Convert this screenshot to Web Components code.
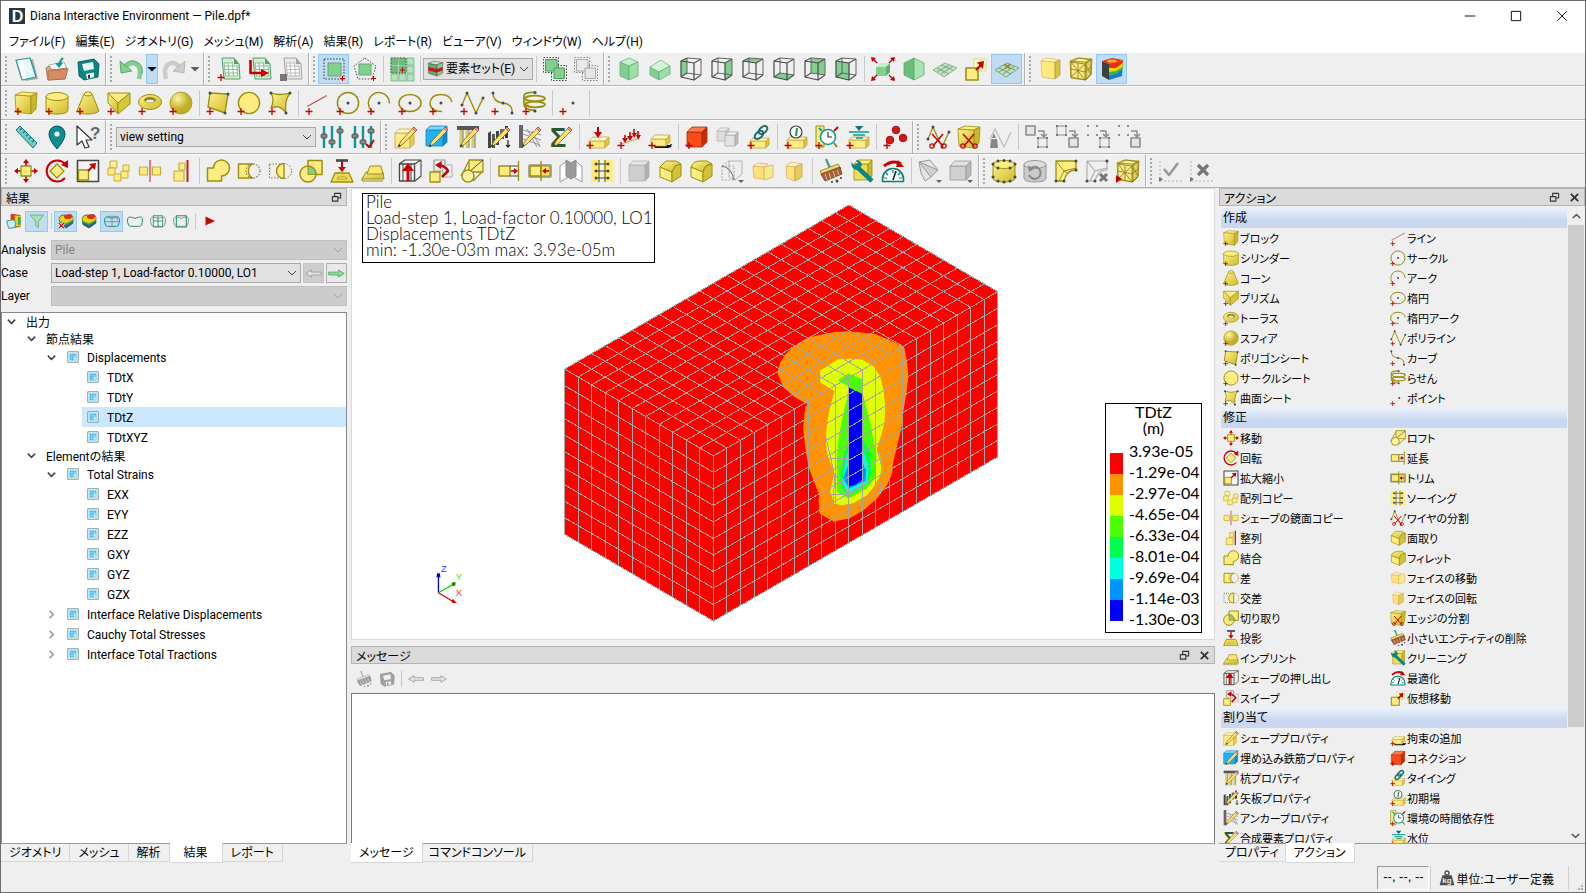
<!DOCTYPE html>
<html lang="ja">
<head>
<meta charset="utf-8">
<title>Diana Interactive Environment — Pile.dpf*</title>
<style>
  html, body {
    margin: 0;
    height: 100%;
  }
  body {
    font-family: Roboto, "Noto Sans CJK JP", sans-serif;
    font-size: 12px;
    color: #000;
    background: #efefef;
    overflow: hidden;
  }
</style>
</head>
<body>
<diana-window></diana-window>

<script>
const RED = '#c80000';
const OLIVE = '#9a9010';
const YEL = '#ffec80';
const DARK = '#484848';
const GREEN = '#82cf90';
const TEAL = '#0a9a9a';

// drawing helpers for the 24x24 icon grid
const poly = (pts, fill, stroke = 'none', sw = 1) => `<polygon points="${pts}" fill="${fill}" stroke="${stroke}" stroke-width="${sw}"/>`;
const line = (d, stroke, sw = 1.2, extra = '') => `<path d="${d}" stroke="${stroke}" stroke-width="${sw}" ${extra}/>`;
const circ = (x, y, r, fill, stroke = 'none', sw = 1) => `<circle cx="${x}" cy="${y}" r="${r}" fill="${fill}" stroke="${stroke}" stroke-width="${sw}"/>`;
const rect = (x, y, w, h, fill, stroke = 'none', sw = 1, extra = '') => `<rect x="${x}" y="${y}" width="${w}" height="${h}" fill="${fill}" stroke="${stroke}" stroke-width="${sw}" ${extra}/>`;
const dots = (...p) => p.map(([x, y]) => circ(x, y, 1.5, DARK)).join('');
const plus = line('M.5 20.5h7M4 17v7', RED, 1.3);
const plusRight = line('M18 21.5h5M20.5 19v5', RED, 1.1);
const box = (x, y, w, h, d, front, side, top, stroke = 'none') =>
  poly(`${x},${y + d} ${x + w - d},${y + d} ${x + w - d},${y + h} ${x},${y + h}`, front, stroke, .8) +
  poly(`${x},${y + d} ${x + d},${y} ${x + w},${y} ${x + w - d},${y + d}`, top, stroke, .8) +
  poly(`${x + w - d},${y + d} ${x + w},${y} ${x + w},${y + h - d} ${x + w - d},${y + h}`, side, stroke, .8);
const pencil = poly('20,2 23,5 9,19 4,22 7,16', '#ffdf6e', '#7c6a20', .8) + poly('20,2 23,5 21.5,6.5 18.5,3.5', '#e89a9a', '#a04040', .6) + poly('4,22 5,19 7,21', '#333');

const FACES = {
  left: '2,4 8,1 8,16 2,20', right: '15,6 22,2 22,18 15,23', top: '2,4 8,1 22,2 15,6',
  bottom: '2,20 8,16 22,18 15,23', front: '2,4 15,6 15,23 2,20', back: '8,1 22,2 22,18 8,16'
};
const wire = face => poly(FACES[face], GREEN) + poly(FACES.back, 'none', '#666', 1) + poly(FACES.front, 'none', DARK, 1.2) +
  line('M2 4L8 1M15 6L22 2M15 23L22 18M2 20L8 16', '#555', 1.1);
const table = (fill, lines, cell) => poly('5,1 17,1 22,7 23,22 7,22', fill, lines, 1) + poly('17,1 17,7 22,7', lines) +
  poly('7,6 16,6 17,9 20,9 20.5,19 8.5,19', '#fff') + line('M7 6h9M7 9h13M8 12.500h12M8 16h12.500M8.500 19h12M7 6l1.500 13M11 6l1 13M15.500 6l1 13M20 9l.5 10', cell, .9);
const block = (c = ['url(#y)', '#c9b72c', YEL]) => poly('1,4 17,5 17,23 2,21', c[0], OLIVE, .8) + poly('1,4 8,1 23,2 17,5', c[2], OLIVE, .8) + poly('17,5 23,2 22,18 17,23', c[1], OLIVE, .8);
const rainbow = poly('2,4 9,7 9,23 2,19', '#3c4043') + poly('2,4 12,1 23,3 9,7', '#e83010') +
  poly('9,7 23,3 22,19 9,23', '#1878d8') + poly('9,7 23,3 22.4,13 16,17 9,19', '#30b850') + poly('9,7 23,3 22.6,10 16,14 9,15', '#f8d000') + poly('9,7 23,3 22.8,6 16,11 9,11', '#e83010') +
  `<ellipse cx="12" cy="4" rx="5" ry="1.6" fill="#ffb030"/>`;
const blob = `<path d="M1 7q6-8 12-3q6-6 10 2v9l-11 8l-10-6z" fill="#3a6c58"/><path d="M2 8q6-7 11-3q5-5 9 1v6l-10 6l-9-4z" fill="#48b050"/><path d="M2 7q6-5 10-2q5-4 10 1v4l-10 5l-9-3z" fill="#f0d010"/><ellipse cx="15" cy="5.5" rx="6" ry="3.5" fill="#e03010"/><path d="M3 16l9 5l10-7v2l-10 7l-9-5z" fill="#2858b0"/>`;
const outline = (extra, strong) => line('M1 14q-1-8 3-8h1q7 4 14 0h1q4 0 3 8q-1 6-4 6H5q-3 0-4-6z', strong ? '#2b8f78' : '#8a9c98', 1.5) + extra;
const arrow = (c, f) => poly('1,12 9,7 9,10 23,10 23,14 9,14 9,17', f, c, 1);
const cylinder = `<path d="M1 5v14q0 4 11 4t11-4V5z" fill="url(#y)" stroke="${OLIVE}"/><ellipse cx="12" cy="5.5" rx="11" ry="4" fill="${YEL}" stroke="${OLIVE}"/>`;
const meshLines = line('M2 5l14 2v16L2 20zM16 7l6-4v14l-6 6M2 5l8-4 12 2M2 12l14 3M9 6v15M2 5l14 18M2 20L16 7M16 15l6-5M16 7l6 10', '#8a7a10', .8);
const scissors = line('M6 9l11 12M17 9L7 21', RED, 1.5) + circ(6, 21, 2.2, 'none', RED, 1.2) + circ(18, 21, 2.2, 'none', RED, 1.2);
const sliders = line('M4 1v22M12 1v22M20 1v22', TEAL, 2.4) + [[4, 11], [12, 17], [20, 6]].map(([x, y]) => rect(x - 3, y - 2, 6, 4, '#888', '#444', .8, 'rx="1"')).join('');
const cogs = (a, b) => a + b + line('M13 6h6v5M16 9l3 3 3-3', '#8c8c8c', 1.5);
const openSq = (x, y) => rect(x, y, 9, 9, 'none', '#8c8c8c', 1) + [[0, 0], [9, 0], [0, 9], [9, 9]].map(([a, b]) => rect(x + a - 1, y + b - 1, 2, 2, '#777')).join('');
const fullSq = (x, y) => rect(x, y, 9, 9, '#e4e4e4', '#8c8c8c', 1.6);
const dotSq = (x, y) => [[0, 0], [9, 0], [0, 9], [9, 9]].map(([a, b]) => rect(x + a - 1, y + b - 1, 2, 2, '#8c8c8c')).join('');
const roof = (d) => poly('2,8 14,13 14,23 2,18', YEL, OLIVE) + `<path d="${d}" fill="url(#y)" stroke="${OLIVE}"/>` + poly('14,13 17,7 23,5 23,17 14,23', '#d3c238', OLIVE);
const dropMark = poly('18,21 24,21 21,24', '#666');

const ICONS = {
  logo: rect(0, 0, 24, 24, '#24383c') + '<text x="4" y="21" font-family="Liberation Sans" font-weight="700" font-size="24" fill="#fff">D</text>',
  new: poly('5,5 19,2 24,22 11,24', '#a4aeae') + poly('2,3 16,1 22,20 8,23', '#e6f8f8', '#2a9494', 1.2) + poly('4,4 9,4 12,21 9,22', '#fff'),
  open: poly('4,8 19,5 22,12 5,13', '#fff', '#aaa') + poly('1,11 4,9 7,13 22,11 20,22 3,23', '#e3a27f', '#a96848', .8) + poly('3,14 23,12 20,22 3,23', '#d88c66', '#a96848', .8) + line('M14 9q0-4 4-8', TEAL, 2.2) + poly('10,6 18,6 14,11', TEAL),
  save: poly('2,5 18,2 23,7 22,20 8,23 3,19', '#0b8585', '#055', .8) + poly('6,7 17,5 18,12 8,14', '#e7f5f5') + poly('10,17 18,15.500 18,20 11,22', '#fff') + poly('12,18 14,17.500 14,21 12,21.500', '#333'),
  undo: line('M6 11q5-7 11-4t3 15', GREEN, 4.6) + line('M4 9q7-8 14-4t5 12', '#4a9a5c', .8) + poly('1,4 2,16 13,14', GREEN, '#4a9a5c', .8),
  redo: line('M18 11q-5-7-11-4t-3 15', '#b4b4b4', 4.4) + poly('23,4 22,16 11,14', '#b4b4b4', '#888', .8),
  tableNew: table('#cfeed4', '#5c9c6c', '#7fb78c') + plus,
  tableArrow: table('#cfeed4', '#5c9c6c', '#7fb78c') + line('M2.500 3v13h13', RED, 2.6) + poly('13,12 21,16 13,20', RED),
  tableGray: table('#e8e8e8', '#a4a4a4', '#b4b4b4') + rect(1, 17, 7, 7, '#777'),
  selRect: rect(2, 2, 20, 20, 'none', DARK, 1.1, 'stroke-dasharray="1.6 1.4"') + rect(6, 6, 13, 13, GREEN, '#5cae6c') + plusRight,
  selPent: `<polygon points="12,1 23,9 19,22 5,22 1,9" fill="none" stroke="${DARK}" stroke-width=".9" stroke-dasharray="1.6 1.4"/>` + rect(6, 7, 12, 11, GREEN, '#5cae6c') + plusRight,
  setGrid: [0, 1, 2].map(r => [0, 1, 2].map(c => rect(1 + c * 8, 1 + r * 8, 7, 7, r < 2 && c < 2 ? '#6cbc7c' : '#b4e2bc', '#7ab088', .8)).join('')).join('') + rect(1, 1, 15, 15, 'none', '#3c6a46', 1, 'stroke-dasharray="1.6 1.4"') + line('M10 13h5M12.500 10.500v5', RED, 1),
  layers: poly('2,4 14,6 14,22 2,18', '#5fae70', '#444', .7) + poly('2,4 10,1 22,3 14,6', '#cfeed4', '#444', .7) + poly('14,6 22,3 22,18 14,22', '#82cf90', '#444', .7) + poly('2,9 14,12 22,9 22,14 14,17 2,14', '#d41010'),
  overlapFull: rect(.5, .5, 15, 15, 'none', DARK, 1, 'stroke-dasharray="1.5 1.5"') + rect(8.5, 8.5, 15, 15, 'none', DARK, 1, 'stroke-dasharray="1.5 1.5"') + rect(2.5, 2.5, 11.5, 11.5, GREEN, '#4e9c5e') + rect(11, 11, 10.5, 10.5, GREEN, '#4e9c5e'),
  overlapEmpty: rect(.5, .5, 15, 15, 'none', '#888', 1, 'stroke-dasharray="1.5 1.5"') + rect(8.5, 8.5, 15, 15, 'none', '#888', 1, 'stroke-dasharray="1.5 1.5"') + rect(2.5, 2.5, 11.5, 11.5, '#eaeaea', '#aaa') + rect(11, 11, 10.5, 10.5, '#e4e4e4', '#aaa'),
  prismFront: poly('3,5 12,9 12,23 3,19', '#82cf90', '#63aa70', .7) + poly('3,5 12,1 21,5 12,9', '#c2f0c8', '#63aa70', .7) + poly('12,9 21,5 21,19 12,23', '#9be0a6', '#63aa70', .7),
  prismSide: poly('2,10 11,15 11,23 2,18', '#82cf90', '#63aa70', .7) + poly('2,10 13,3 22,9 11,15', '#d2f6d6', '#63aa70', .7) + poly('11,15 22,9 22,17 11,23', '#9be0a6', '#63aa70', .7),
  viewLeft: wire('left'), viewRight: wire('right'), viewTop: wire('top'), viewBottom: wire('bottom'), viewBack: wire('back'), viewFront: wire('front'),
  fit: box(5, 6, 14, 13, 4, '#82cf90', '#5fae70', '#c2f0c8') + line('M2 2l4 4M22 2l-4 4M2 22l4-4M22 22l-4-4', RED, 1.4) + poly('0,0 5,1 1,5', RED) + poly('24,0 19,1 23,5', RED) + poly('0,24 5,23 1,19', RED) + poly('24,24 19,23 23,19', RED),
  shadeView: poly('2,6 12,1 12,23 2,18', '#6dbd7c', '#57a066', .7) + poly('12,1 22,6 22,18 12,23', '#a8e4b0', '#57a066', .7),
  plane: poly('0,13 12,6 24,11 11,20', '#bfe3c2', '#7aa880', .8) + line('M4 11l12 6M8 8l12 5M4 15l12-7M8 17l12-8', '#7aa080', .9),
  planeX: poly('0,13 12,6 24,11 11,20', '#bfe3c2', '#6a9870', .8) + line('M4 11l12 6M8 8l12 5M4 15l12-7M8 17l12-8', '#6a9870', .9) + line('M10 7l5 5M15 7l-5 5', '#a08010', 1.2),
  virtualMove: rect(10, 2, 12, 12, '#fff8c8', '#e4d890') + rect(2, 11, 12, 12, YEL, OLIVE, 1.6) + line('M12 13l6-6', RED, 2.4) + poly('13,5.500 20,4 19,12', RED),
  solid: poly('3,4 17,5 17,22 4,20', '#ffe980', '#d6bc50', .7) + poly('3,4 8,1 22,3 17,5', '#fff4b0', '#d6bc50', .7) + poly('17,5 22,3 22,18 17,22', '#d8c040', '#b09a30', .7),
  solidMesh: block(['#f7e68a', '#e0cc60', '#fff0a0']) + meshLines,
  contour: rainbow,

  block: block() + plus,
  cylinder: cylinder + plus,
  cone: `<path d="M8 3L1 20q3 3 11 3t11-3L16 3z" fill="url(#y)" stroke="${OLIVE}"/><ellipse cx="12" cy="3" rx="4" ry="2" fill="${YEL}" stroke="${OLIVE}"/>` + plus,
  prism: poly('1,2 23,2 11,12', YEL, OLIVE) + poly('1,2 11,12 11,23 1,12', 'url(#y)', OLIVE) + poly('23,2 11,12 11,23 23,13', '#d6c63a', OLIVE) + plus,
  torus: `<ellipse cx="12" cy="11" rx="11.5" ry="7.5" fill="url(#y)" stroke="${OLIVE}"/><ellipse cx="12" cy="9" rx="5.5" ry="2.6" fill="#8c8420" stroke="${OLIVE}"/><ellipse cx="12" cy="10.2" rx="4" ry="1.4" fill="#efefef"/>` + plus,
  sphere: circ(12, 12, 11, 'url(#s)', OLIVE, .7) + plus,
  polySheet: poly('4,2 22,3 19,22 2,16', 'url(#y)', OLIVE, 1.4) + dots([4, 2], [22, 3], [19, 22]) + plus,
  circleSheet: circ(12, 12, 10.6, YEL, OLIVE, 1.4) + plus,
  curvedSheet: `<path d="M3 2q9 3 19 0q-6 8-4 20q-6-9-15-5q4-8 0-15z" fill="url(#y)" stroke="${OLIVE}" stroke-width="1.3"/>` + dots([3, 2], [22, 2], [18, 22]) + plus,
  line: line('M3 15L21 5', '#c44', 1.1) + circ(3, 15, 1, '#8b8') + circ(21, 5, 1.1, '#8b8') + plus,
  circle: circ(12, 12, 10.6, 'none', OLIVE, 1.5) + dots([12, 12]) + plus,
  arc: line('M8 22A10.6 10.6 0 1 1 22.500 11', OLIVE, 1.5, 'transform="rotate(8 12 12)"') + dots([12, 12]) + plus,
  ellipse: `<ellipse cx="12" cy="12" rx="11" ry="8.6" fill="none" stroke="${OLIVE}" stroke-width="1.5"/>` + dots([12, 12]) + plus,
  ellipseArc: line('M13 20.6Q1 20 1 12Q2 3.400 12 3.400Q21 3.400 23 11', OLIVE, 1.5) + dots([12, 12]) + plus,
  polyline: line('M2 14L7 2l9 20 7-15', OLIVE, 1.4) + dots([2, 14], [7, 2], [16, 22], [23, 7]) + plus,
  curve: line('M2 2q0 9 10 10t9 10', OLIVE, 1.5) + dots([2, 2], [12, 12], [21, 22]) + plus,
  helix: `<ellipse cx="13" cy="7.500" rx="10" ry="2.800" fill="none" stroke="${OLIVE}" stroke-width="1.8"/><ellipse cx="13" cy="13.500" rx="10" ry="2.800" fill="none" stroke="${OLIVE}" stroke-width="1.8"/>` + line('M13 1.500Q2 1 2 5v6q0 3 5 4M2 13q0 6 11 6.500', OLIVE, 1.8) + dots([13, 1.5], [13, 20]) + plus,
  point: dots([14, 12]) + plus,

  ruler: poly('2,5 6,1 23,18 19,23', '#6ecaca', '#177a7a') + line('M8 3l-2 2M11 6l-2 2M14 9l-2 2M17 12l-2 2M20 15l-2 2', '#177a7a'),
  pin: `<path d="M12 24Q4 15 4 9a8 8 0 0 1 16 0q0 6-8 15z" fill="#0e8f8f" stroke="#056"/>` + circ(12, 9, 2.6, '#eee'),
  whatsThis: poly('1,1 1,20 6,16 9,23 13,22 10,15 16,15', '#fff', '#333', 1.2) + '<text x="14" y="14" font-family="Liberation Sans" font-size="17" font-weight="700" fill="#666">?</text>',
  sliders: sliders,
  slidersCheck: sliders + line('M15 19l3 3 5-7', RED, 2),
  propShape: box(1, 4, 19, 19, 4, '#ffe98a', '#e8cc50', '#fff6c0', '#c4a840') + pencil,
  propBar: box(1, 1, 21, 20, 4, '#1fb2f5', '#0a8ad0', '#80d6fc', '#1580c0') + pencil,
  propPile: rect(1, 1, 22, 4, '#555') + line('M5 5v18M11 5v18M17 5v18', '#d8cc60', 3) + line('M7 5v18M13 5v18M19 5v18', '#777', 1) + pencil,
  propSheet: poly('1,8 4,6 4,23 1,23', '#444') + rect(5, 9, 3, 14, '#555') + rect(9, 6, 3, 14, '#444') + rect(13, 4, 4, 10, '#666') + rect(18, 1, 3, 12, '#333') + line('M21 15v7M19 20l2 2 2-2', '#222') + pencil,
  propAnchor: rect(1, 0, 4, 23, '#666') + line('M5 5l18 5M5 9l18 6M5 14l17 6M9 4l10 18M14 6l8 16', '#8c8c8c', .9) + pencil,
  propSigma: '<text x="1" y="22" font-family="Liberation Sans" font-size="27" font-weight="700" fill="#2c5a30">Σ</text>' + pencil,
  load: box(3, 12, 20, 11, 4, YEL, '#e0c440', '#fff6c0', '#c0a840') + line('M12 2v7', RED, 2) + poly('8,7 16,7 12,13', RED) + plus,
  loadMulti: line('M4 19l16-5', '#d8a860', 1.2) + line('M8 10v5M13 7v5M17 4v5M21 6v5', RED, 1.6) + poly('5,13 11,13 8,18', RED) + poly('10,11 16,11 13,16', RED) + poly('15,8 20,8 17,13', RED) + poly('19,10 24,10 21,15', RED) + plus,
  support: poly('5,20 21,20 24,19 23,22 20,23 7,23', '#111') + box(3, 10, 19, 11, 4, YEL, '#e0c440', '#fff6c0', '#c0a840') + plus,
  connection: box(2, 2, 20, 20, 5, '#fb4a18', '#c42c04', '#ff7a50', '#a03010') + plus,
  spheresGray: box(1, 3, 12, 13, 3, '#ddd', '#c4c4c4', '#eee', '#b4b4b4') + box(9, 7, 13, 14, 3, '#e4e4e4', '#bbb', '#f2f2f2', '#aaa'),
  tying: box(3, 13, 19, 10, 3, YEL, '#e0c440', '#fff6c0', '#c0a840') + `<ellipse cx="16" cy="5" rx="5" ry="3" transform="rotate(-40 16 5)" fill="none" stroke="#17706c" stroke-width="2"/><ellipse cx="12" cy="10" rx="5" ry="3" transform="rotate(-40 12 10)" fill="none" stroke="#17706c" stroke-width="2"/>` + plus,
  initial: box(3, 12, 20, 11, 3, YEL, '#e0c440', '#fff6c0', '#c0a840') + circ(12, 7, 6, '#f8f8f8', '#444', 1.2) + line('M12 11l1-8', '#2a9a40', 2) + plus,
  timeDep: rect(1, 1, 8, 21, YEL, OLIVE) + circ(13, 12, 7.5, '#fff', TEAL, 1.6) + line('M13 7v5h4', '#333') + line('M19 6l4-4', RED, 1.8) + line('M7 6L4 3', TEAL, 1.8) + line('M19 18l3 4', '#888020', 1.8) + plus,
  water: box(3, 12, 20, 11, 3, YEL, '#e0c440', '#fff6c0', '#c0a840') + poly('9,1 17,1 13,6', '#0b7070') + line('M3 7h20M7 10h12M10 13h7', TEAL, 1.5) + plus,
  masses: circ(13, 5, 3.8, '#d01818', '#900', .8) + circ(20, 13, 3.8, '#d01818', '#900', .8) + circ(7, 15, 3.8, '#d01818', '#900', .8) + plus,
  splitWire: line('M2 14L7 2l9 20 7-15', OLIVE, 1.3) + dots([2, 14], [7, 2], [16, 22], [23, 7]) + scissors,
  splitEdge: block() + scissors,
  wireGray: line('M2 14L7 4l9 18 7-15', '#bbb', 1.2) + poly('3,14 9,14 10,23 2,23', '#888') + poly('4,13 8,13 6,8', '#888'),
  toOpen: cogs(fullSq(1, 1), openSq(13, 13)),
  toFull: cogs(openSq(1, 1), fullSq(13, 13)),
  dotsOpen: cogs(dotSq(1, 1), openSq(13, 13)),
  dotsFull: cogs(dotSq(1, 1), fullSq(13, 13)),

  move: line('M12 2v20M2 12h20', RED, 1.6) + poly('12,0 15,4 9,4', RED) + poly('12,24 15,20 9,20', RED) + poly('0,12 4,9 4,15', RED) + poly('24,12 20,9 20,15', RED) + rect(7, 7, 10, 10, YEL, OLIVE, 1.3),
  rotate: line('M20 5A10.500 10.500 0 1 0 20 19', RED, 2) + poly('16,6 23,1 23,9', RED) + poly('12,5 19,12 12,19 5,12', YEL, OLIVE, 1.3),
  scale: rect(1.5, 1.5, 21, 21, '#f5f5f5', DARK, 1.6) + rect(2.5, 11, 10, 10, YEL, OLIVE, 1.3) + line('M12 12l5-5', RED, 2) + poly('13,5 20,4 19,11', RED),
  arrayCopy: rect(3, 2, 7, 7, YEL, '#c4b040') + rect(1, 9, 7, 7, YEL, '#c4b040') + rect(7, 15, 7, 7, YEL, '#c4b040') + rect(14, 12, 7, 7, YEL, '#c4b040') + rect(16, 6, 6, 6, YEL, '#c4b040') + rect(4, 3, 4, 3, '#fff4a8'),
  mirror: rect(1.5, 8, 8, 8, YEL, '#c4b040', 1.2) + rect(14.5, 8, 8, 8, YEL, '#c4b040', 1.2) + line('M12 1v22', '#e07070', 1.8),
  align: rect(5, 12, 10, 10, YEL, '#c4b040', 1.2) + rect(10, 4, 6, 7, YEL, '#c4b040', 1.2) + line('M18.500 1v22', '#c02020', 2),
  unite: `<path d="M1.500 9h6a8 8 0 1 1 8 8v5h-14z" fill="${YEL}" stroke="${OLIVE}" stroke-width="1.5"/>`,
  subtract: `<path d="M1.500 5h14a8 8 0 0 0 0 14h-14z" fill="${YEL}" stroke="${OLIVE}" stroke-width="1.4"/><circle cx="16" cy="12" r="7" fill="none" stroke="#888030" stroke-width="1.3" stroke-dasharray="1.5 1.5"/>`,
  intersect: rect(1.5, 5, 14, 14, 'none', '#888030', 1.2, 'stroke-dasharray="1.5 1.5"') + `<path d="M16 4.500a7.500 7.500 0 0 0 0 15z" fill="${YEL}" stroke="${OLIVE}" stroke-width="1.4"/><path d="M16 4.500a7.500 7.500 0 0 1 0 15" stroke="#888030" stroke-dasharray="1.5 1.5"/>`,
  section: rect(9, 1.5, 14, 14, YEL, OLIVE, 1.5) + circ(9, 15, 8, YEL, OLIVE, 1.5) + `<path d="M9 7.200a8 8 0 0 1 7.800 8.200H9z" fill="${GREEN}" stroke="${OLIVE}"/>`,
  project: line('M6 1.500h12', DARK, 2.6) + line('M12 2v8', RED, 2) + poly('8,8 16,8 12,13', RED) + poly('5,14 19,14 23,23 1,23', '#f0dc50', OLIVE, 1.3) + poly('8,18 16,18 17,20 7,20', '#fff7b0', OLIVE, .8),
  imprint: poly('5,13 22,13 23,20 1,20', 'url(#y)', OLIVE) + poly('9,7 20,7 22,15 6,15', '#f8e870', OLIVE) + line('M1 20v2h21', OLIVE, 1),
  extrude: rect(1.5, 5, 15, 17, '#fff', DARK, 1.4) + line('M1 5l6-4h16v16l-6 5M16.500 5L23 1M5 5v17M13 5v17', DARK, 1.1) + line('M10 22V9', RED, 3) + poly('4,12 16,12 10,4', RED),
  sweep: rect(5, 1, 11, 11, '#ececec', '#999', 1.2) + rect(14, 6, 9, 12, '#f2f2f2', '#aaa') + line('M8 6q8 0 11 6l-6 6', RED, 2.6) + poly('6,6 13,2 12,10', RED) + rect(1, 13, 10, 10, YEL, OLIVE, 1.3),
  loft: line('M1 17L9 2M13 22L23 12', OLIVE, 1.3) + rect(9, 1, 14, 12, YEL, OLIVE, 1.3) + line('M9 13L23 1', DARK, 1) + circ(8, 17, 6, '#fff2a0', OLIVE, 1.4),
  extend: rect(2, 7, 11, 10, YEL, OLIVE, 1.5) + line('M13 7h8M13 17h8', DARK, 1) + line('M21.500 2v20', OLIVE, 1.4) + line('M14 12h5', RED, 1.6) + poly('17,9 21,12 17,15', RED),
  trim: rect(0, 5, 24, 14, '#a8a8a8', 'none', 1, 'rx="2"') + rect(2, 7, 11, 10, YEL, OLIVE, 1.5) + rect(13, 7, 9, 10, '#ffe36a', OLIVE, 1.2) + line('M13 2v20', OLIVE, 1.4) + line('M16 12h5', RED, 1.6) + poly('18,9 14,12 18,15', RED),
  sheets: poly('1,7 8,2 8,19 1,23', '#fff', '#999') + poly('16,2 23,7 23,23 16,19', '#fff', '#999') + poly('7,1 12,4 17,1 17,17 12,20 7,17', '#9a9a9a', '#8c8c8c'),
  sewing: rect(1, 1, 8, 22, YEL) + rect(15, 1, 8, 22, YEL) + line('M9 1v22M15 1v22', OLIVE, 1.6) + line('M6 5h12M6 12h12M6 19h12', DARK, 1) + dots([6, 5], [18, 5], [6, 12], [18, 12], [6, 19], [18, 19]),
  boxGray: box(2, 2, 20, 20, 4, '#cfcfcf', '#b0b0b0', '#e6e6e6', '#b0b0b0'),
  chamfer: roof('M2 8L8 2h10l5 3-6 2-3 6z'),
  fillet: roof('M2 8Q4 2 11 2h7l5 3q-8 0-9 8z'),
  ghost: poly('9,2 22,2 22,15 15,21 9,18', '#eee', '#b4b4b4') + line('M2 7l7-5M2 7v14h12M2 7h12v14', '#aaa', 1.1, 'stroke-dasharray="2 1.4"') + line('M2 7q10 2 12 14', '#777', 1.2) + dropMark,
  faceMove: poly('2,7 13,8 13,20 3,19', '#ffe27a', '#e0b060', .8) + poly('2,7 7,4 17,5 13,8', '#fff2c0', '#e0b060', .8) + poly('13,8 22,6 22,18 13,21', '#f8ea90', '#d8b050', .8),
  faceRotate: poly('4,7 13,8 13,22 5,19', '#ffe27a', '#e0b060', .8) + poly('4,7 9,3 20,5 13,8', '#fff2c0', '#e0b060', .8) + poly('13,8 20,5 20,18 13,22', '#e8cc60', '#c8a040', .8),
  broom: line('M7 0l4 9', '#2a9a80', 2) + poly('1,12 19,5 22,10 3,17', '#f0d870', '#8c7a20', .8) + poly('2,15 21,8 23,15 6,22', '#a5603c', '#743c20', .8) + line('M6 15l2 6M10 14l2 6M14 12l2 6M18 11l2 5', '#e8b898', 1) + dots([18, 22]) + circ(13, 23, .9, '#222') + circ(22, 19, .9, '#222'),
  wrench: box(4, 1, 18, 20, 4, '#f0dc50', '#c9b72c', YEL, OLIVE) + line('M5 6l17 16', '#0a8484', 4.5) + `<path d="M1 3l4 4 3-3-2-3q5 0 6 5l-4 5q-6 1-7-8z" fill="#0a8484"/>`,
  gauge: `<path d="M1.500 20a10.500 10.500 0 0 1 21 0v2.500h-21z" fill="#f4ffff" stroke="#0a7c7c" stroke-width="1.6"/>` + line('M12 11v3M5 14l2 2M19 14l-2 2M3 19h3M18 19h3', '#0a7c7c') + line('M12 21l3-9', '#222', 1.6) + line('M3 7q9-7 17-2', RED, 3) + poly('17,1 23,8 15,8', RED),
  sheetGray: poly('1,3 12,1 20,11 13,18 7,22 3,14', '#e4e4e4', '#999') + poly('1,3 20,11 13,18', '#d0d0d0', '#999') + dropMark,
  boxGray2: box(1, 2, 21, 19, 5, '#d0d0d0', '#b8b8b8', '#e2e2e2', '#999') + dropMark,
  meshCyl: cylinder + dots([1, 5], [6, 2], [12, 1.5], [18, 2], [23, 5], [1, 18], [6, 22], [12, 23], [18, 22], [23, 18], [6, 9], [18, 9]),
  meshCylGray: `<path d="M1 5v14q0 4 11 4t11-4V5z" fill="#cacaca" stroke="#999"/><ellipse cx="12" cy="5.5" rx="11" ry="4" fill="#ddd" stroke="#999"/>` + line('M7 10a6 6 0 1 1-1 6', '#888', 2) + poly('5,6 6,13 11,10', '#888'),
  meshSheet: `<path d="M2 2h20v9q-5 0-8 3t-4 8H2z" fill="${YEL}" stroke="${OLIVE}" stroke-width="1.3"/>` + line('M2 2l8 10 12-3M10 12l-5 10M10 12l4 2', OLIVE, 1) + dots([22, 2], [22, 11], [2, 22], [10, 22]),
  meshDel: line('M2 2h20v9q-5 0-8 3t-4 8H2zM2 2l8 10 12-3M10 12l-5 10', '#aaa', 1.1) + dots([22, 2], [2, 22], [10, 22]) + line('M15 15l7 7M22 15l-7 7', '#777', 3),
  meshRun: block(['#f7e68a', '#e0cc60', '#fff0a0']) + meshLines + poly('0,16 0,24 6,20', RED),
  apply: line('M5 10l5 6L19 4', '#999', 2.6) + line('M1 2v20M1 22h22', '#b0b0b0', 1, 'stroke-dasharray="2 2"') + poly('0,18 4,20 0,23', '#777'),
  cancel: line('M8 6l10 10M18 6L8 16', '#777', 3.4) + line('M1 2v20M1 22h22', '#b0b0b0', 1, 'stroke-dasharray="2 2"') + poly('0,18 4,20 0,23', '#777'),

  resultSave: poly('7,1 22,3 22,21 7,23', '#e03818') + rect(13, 4, 9, 16, '#e8d020') + rect(18, 6, 4, 12, '#30b060') + poly('1,12 11,10 15,15 13,22 4,23', '#cfeeee', TEAL, 1.3),
  filter: poly('2,3 22,3 14,13 14,22 10,19 10,13', '#a6e2ae', '#5ea068'),
  resultOff: blob + line('M1 15l8 8M9 15l-8 8', '#fff', 4) + line('M1 15l8 8M9 15l-8 8', RED, 1.8),
  result: blob,
  shapeBoth: outline(line('M4 5h16v6M12 5v16M1 13h22', '#5a9c90', 1.3), true),
  shapeDef: outline('', true),
  shapeGrid: outline(line('M5 4h14v17H5zM12 4v17M5 12h14', '#2b8f78', 1.3), false),
  shapeOrig: outline(line('M5 4h15v17H5z', '#2b8f78', 1.6), false),
  play: poly('3,3 22,12 3,21', '#c00808'),
  arrowLeft: arrow('#8a8a8a', '#e4e4e4'),
  arrowRight: `<g transform="matrix(-1 0 0 1 24 0)">${arrow('#8a8a8a', '#e4e4e4')}</g>`,
  arrowNext: `<g transform="matrix(-1 0 0 1 24 0)">${arrow('#3d9a50', '#8ee09a')}</g>`,
  grid: rect(1.5, 1.5, 21, 21, '#f4fbfd', '#7c9a9e', 2) + rect(5, 5, 14, 14, '#36b8f0') + rect(13, 11, 6, 8, '#c9d6da') + line('M9.500 5v14M14.500 5v14M5 9.500h14M5 14.500h14', '#bfeaff', 1),
  weight: `<path d="M5 8h14l4 15H1z" fill="#4c4c4c"/>` + circ(12, 4.5, 3, 'none', '#4c4c4c', 2) + '<text x="5" y="20" font-family="Liberation Sans" font-size="12" font-weight="700" fill="#eee">kg</text>',
  minimize: line('M3 12h18', '#000', 1.6),
  maximize: rect(4, 4, 16, 16, 'none', '#000', 1.6),
  close: line('M4 4l16 16M20 4L4 20', '#000', 1.6),
  float: rect(8, 3, 13, 10, 'none', '#333', 2.4) + rect(3, 10, 12, 10, '#dadada', '#333', 2.4),
  dockClose: line('M4 4l16 16M20 4L4 20', '#333', 4),
  chevDown: line('M4 8l8 8 8-8', '#444', 3.4),
  chevThin: line('M4 8l8 8 8-8', '#444', 2),
  chevRight: line('M8 4l8 8-8 8', '#999', 3.4),
  chevUp: line('M2 16l10-9 10 9', '#555', 4),
  caret: poly('1,7 23,7 12,18', '#000')
};

class DianaIcon extends HTMLElement {
  constructor() {
    super();
    this.attachShadow({ mode: 'open' });
  }

  connectedCallback() {
    this.shadowRoot.innerHTML = `
    <style>
      :host { display: block; flex: none; width: var(--icon-size, 24px); height: var(--icon-size, 24px); }
      svg { display: block; width: 100%; height: 100%; overflow: visible; }
    </style>
    <svg viewBox="0 0 24 24" fill="none" stroke-linejoin="round" aria-hidden="true">
      <defs>
        <linearGradient id="y" x2="1" y2="1"><stop stop-color="#fff08a"/><stop offset="1" stop-color="#cdbb2c"/></linearGradient>
        <radialGradient id="s" cx=".35" cy=".3"><stop stop-color="#fff3a0"/><stop offset="1" stop-color="#c2af28"/></radialGradient>
      </defs>
      ${ICONS[this.getAttribute('name')] || ''}
    </svg>`;
  }
}
customElements.define('diana-icon', DianaIcon);

class ToolButton extends HTMLElement {
  constructor() {
    super();
    this.attachShadow({ mode: 'open' });
  }

  connectedCallback() {
    const icon = this.getAttribute('icon');
    this.shadowRoot.innerHTML = `
    <style>
      :host { display: block; flex: none; width: var(--tool-width, 31px); height: var(--tool-height, 30px); }
      :host([narrow]) { width: 12px; --icon-size: 10px; }
      button {
        width: 100%;
        height: 100%;
        box-sizing: border-box;
        padding: 0;
        border: 1px solid transparent;
        background: none;
        display: flex;
        align-items: center;
        justify-content: center;
      }
      :host([active]) button { background: #c0dcf3; border-color: #90c8f6; }
      :host([muted]) diana-icon { filter: grayscale(1); opacity: .6; }
    </style>
    <button type="button" aria-label="${icon}"><diana-icon name="${icon}"></diana-icon></button>`;
  }
}
customElements.define('tool-button', ToolButton);

class ToolGroup extends HTMLElement {
  constructor() {
    super();
    this.attachShadow({ mode: 'open' }).innerHTML = `
    <style>
      :host {
        display: flex;
        align-items: center;
        border-right: 1px solid #b0b0b0;
        box-shadow: 1px 0 #fff;
        padding-right: 2px;
      }
      :host([open]) { border-color: transparent; box-shadow: none; }
      .handle {
        width: 3px;
        height: 26px;
        margin: 0 2px 0 4px;
        background: radial-gradient(circle at 1px 1px, #aaa 1px, transparent 1px) 0 0 / 3px 4px;
      }
    </style>
    <span class="handle"></span>
    <slot></slot>`;
  }
}
customElements.define('tool-group', ToolGroup);

class ToolSeparator extends HTMLElement {
  constructor() {
    super();
    this.attachShadow({ mode: 'open' }).innerHTML = `
    <style>
      :host { display: block; flex: none; width: 1px; height: var(--sep-height, 26px); margin: 0 2px 0 3px; background: #c8c8c8; }
    </style>`;
  }
}
customElements.define('tool-separator', ToolSeparator);

// drop-down with its own chevron and an optional icon in front
class DianaSelect extends HTMLElement {
  constructor() {
    super();
    this.attachShadow({ mode: 'open' });
  }

  connectedCallback() {
    const icon = this.getAttribute('icon');
    const off = this.hasAttribute('disabled');
    this.shadowRoot.innerHTML = `
    <style>
      :host { display: flex; position: relative; height: 20px; min-width: 0; }
      select {
        appearance: none;
        width: 100%;
        height: 100%;
        box-sizing: border-box;
        margin: 0;
        padding: 0 ${icon ? 8 : 18}px 0 ${icon ? 22 : 3}px;
        border: 1px solid #a8a8a8;
        border-radius: 0;
        background: #e1e1e1;
        font: inherit;
        color: #000;
      }
      select:disabled { background: #ccc; border-color: #bfbfbf; color: #838383; opacity: 1; }
      .chev, .lead { position: absolute; top: 50%; transform: translateY(-50%); pointer-events: none; }
      .chev { right: 3px; --icon-size: 12px; opacity: ${off ? .3 : 1}; }
      .lead { left: 4px; --icon-size: 17px; }
    </style>
    <select aria-label="${this.getAttribute('label')}" ${off ? 'disabled' : ''}><option>${this.getAttribute('value') || ''}</option></select>
    ${icon ? `<diana-icon class="lead" name="${icon}"></diana-icon>` : ''}
    <diana-icon class="chev" name="chevThin"></diana-icon>`;
  }
}
customElements.define('diana-select', DianaSelect);

// one string per group; + active, - muted, ^ narrow, | separator, @ combo box
const TOOLBARS = [
  ['new open save', 'undo ^caret+ redo- ^caret-', 'tableNew tableArrow tableGray',
    'selRect+ selPent | setGrid | @set | overlapFull overlapEmpty',
    'prismFront prismSide viewLeft viewRight viewTop viewBottom viewBack viewFront | fit shadeView plane virtualMove planeX+',
    'solid solidMesh contour+'],
  ['block cylinder cone prism torus sphere | polySheet circleSheet curvedSheet | line circle arc ellipse ellipseArc polyline curve helix | point |'],
  ['ruler pin whatsThis', '@view sliders slidersCheck',
    'propShape propBar propPile propSheet propAnchor propSigma | load loadMulti support | connection spheresGray tying | initial timeDep water | masses',
    'splitWire splitEdge wireGray | toOpen toFull dotsOpen dotsFull'],
  ['move rotate scale arrayCopy mirror align | unite subtract intersect section project imprint | extrude sweep loft | extend trim sheets sewing | boxGray chamfer fillet ghost faceMove faceRotate | broom wrench gauge | sheetGray boxGray2',
    'meshCyl meshCylGray meshSheet meshDel meshRun', 'apply cancel']
];
const COMBOS = {
  '@set': '<diana-select class="set" icon="layers" label="要素セット" value="要素セット(E)"></diana-select>',
  '@view': '<diana-select class="view" label="view setting" value="view setting"></diana-select>'
};

function toolMarkup(token) {
  if (token === '|') return '<tool-separator></tool-separator>';
  if (COMBOS[token]) return COMBOS[token];
  const name = token.replace(/[\^+-]/g, '');
  return `<tool-button icon="${name}" ${token.startsWith('^') ? 'narrow' : ''} ${token.endsWith('+') ? 'active' : ''} ${token.endsWith('-') ? 'muted' : ''}></tool-button>`;
}

class ToolBars extends HTMLElement {
  constructor() {
    super();
    this.attachShadow({ mode: 'open' });
  }

  connectedCallback() {
    this.shadowRoot.innerHTML = `
    <style>
      :host { display: block; }
      .row {
        display: flex;
        height: 34px;
        box-sizing: border-box;
        border-top: 1px solid #fff;
        border-bottom: 1px solid #b4b4b4;
      }
      .set { width: 110px; height: 22px; font-feature-settings: "palt"; }
      .view { width: 200px; margin-left: 1px; }
    </style>
    ${TOOLBARS.map(row => `<div class="row">${row.map((group, i) =>
      `<tool-group ${i === row.length - 1 ? 'open' : ''}>${group.split(' ').map(toolMarkup).join('')}</tool-group>`).join('')}</div>`).join('')}`;
  }
}
customElements.define('tool-bars', ToolBars);

class TitleBar extends HTMLElement {
  constructor() {
    super();
    this.attachShadow({ mode: 'open' }).innerHTML = `
    <style>
      :host { display: flex; align-items: center; height: 29px; padding-left: 8px; background: #fff; --icon-size: 16px; }
      span { flex: 1; margin-left: 5px; }
      button { width: 46px; height: 29px; padding: 0; border: 0; background: none; display: flex; align-items: center; justify-content: center; --icon-size: 14px; }
    </style>
    <diana-icon name="logo"></diana-icon>
    <span><slot></slot></span>
    <button type="button" aria-label="最小化"><diana-icon name="minimize"></diana-icon></button>
    <button type="button" aria-label="最大化"><diana-icon name="maximize"></diana-icon></button>
    <button type="button" aria-label="閉じる"><diana-icon name="close"></diana-icon></button>`;
  }
}
customElements.define('title-bar', TitleBar);

class MenuBar extends HTMLElement {
  constructor() {
    super();
    const items = ['ファイル(F)', '編集(E)', 'ジオメトリ(G)', 'メッシュ(M)', '解析(A)', '結果(R)', 'レポート(R)', 'ビューア(V)', 'ウィンドウ(W)', 'ヘルプ(H)'];
    this.attachShadow({ mode: 'open' }).innerHTML = `
    <style>
      :host { display: flex; height: 22px; padding-left: 3px; background: #fff; }
      button {
        padding: 0 5px 2px;
        border: 0;
        background: none;
        color: #000;
        font: inherit;
        font-feature-settings: "palt";
      }
    </style>
    ${items.map(t => `<button type="button">${t}</button>`).join('')}`;
  }
}
customElements.define('menu-bar', MenuBar);

class DockTitle extends HTMLElement {
  constructor() {
    super();
    this.attachShadow({ mode: 'open' });
  }

  connectedCallback() {
    this.shadowRoot.innerHTML = `
    <style>
      :host {
        display: flex;
        align-items: center;
        height: 18px;
        box-sizing: border-box;
        padding: 0 4px;
        border: 1px solid #b4b4b4;
        background: #dadada;
        font-feature-settings: "palt";
        --icon-size: 11px;
      }
      span { flex: 1; }
      button { padding: 0; border: 0; margin-left: 9px; background: none; }
    </style>
    <span><slot></slot></span>
    <button type="button" aria-label="フロート"><diana-icon name="float"></diana-icon></button>
    ${this.hasAttribute('closable') ? '<button type="button" aria-label="閉じる"><diana-icon name="dockClose"></diana-icon></button>' : ''}`;
  }
}
customElements.define('dock-title', DockTitle);

class TabStrip extends HTMLElement {
  constructor() {
    super();
    this.attachShadow({ mode: 'open' });
  }

  connectedCallback() {
    const current = this.getAttribute('current');
    this.shadowRoot.innerHTML = `
    <style>
      :host { display: flex; align-items: flex-start; height: 20px; border-top: 1px solid #999; margin-top: -1px; }
      button {
        height: 18px;
        padding: 0 var(--tab-pad, 6px);
        border: solid #d6d6d6;
        border-width: 0 1px 1px 0;
        background: #f0f0f0;
        color: #000;
        font: inherit;
        line-height: 16px;
        font-feature-settings: "palt";
      }
      [aria-selected=true] { height: 20px; padding: 0 var(--tab-pad-current, 8px); margin-top: -1px; background: #fff; }
    </style>
    ${this.getAttribute('tabs').split(' ').map(t =>
      `<button type="button" role="tab" aria-selected="${t === current}">${t}</button>`).join('')}`;
  }
}
customElements.define('tab-strip', TabStrip);

// [depth, label, kind]; kind: open / closed / leaf / plain (open, without an icon)
const TREE = [
  [0, '出力', 'plain'], [1, '節点結果', 'plain'], [2, 'Displacements', 'open'],
  [3, 'TDtX', 'leaf'], [3, 'TDtY', 'leaf'], [3, 'TDtZ', 'leaf'], [3, 'TDtXYZ', 'leaf'],
  [1, 'Elementの結果', 'plain'], [2, 'Total Strains', 'open'],
  [3, 'EXX', 'leaf'], [3, 'EYY', 'leaf'], [3, 'EZZ', 'leaf'], [3, 'GXY', 'leaf'], [3, 'GYZ', 'leaf'], [3, 'GZX', 'leaf'],
  [2, 'Interface Relative Displacements', 'closed'], [2, 'Cauchy Total Stresses', 'closed'], [2, 'Interface Total Tractions', 'closed']
];

class ResultTree extends HTMLElement {
  constructor() {
    super();
    this.attachShadow({ mode: 'open' }).innerHTML = `
    <style>
      :host { display: block; background: #fff; border: 1px solid #828790; }
      ul { list-style: none; margin: 0; padding: 0; }
      li { display: flex; padding-left: calc(var(--depth) * 20px + 4px); }
      button {
        display: flex;
        align-items: center;
        flex: 1;
        height: 20px;
        padding: 2px 0 0;
        border: 0;
        background: none;
        font: inherit;
        color: #000;
        text-align: left;
      }
      .plain button { height: 17px; padding: 0; }
      .mark { width: 21px; display: flex; align-items: center; --icon-size: 11px; }
      .plain .mark { width: 20px; }
      .leaf .mark { width: 16px; }
      .leaf button { padding-left: 5px; }
      .pic { width: 20px; padding-bottom: 2px; --icon-size: 12px; }
      [aria-selected=true] button { background: #cce8ff; }
    </style>
    <ul role="tree">
      ${TREE.map(([depth, label, kind]) => `
      <li class="${kind}" style="--depth:${depth}" role="treeitem" aria-selected="${label === 'TDtZ'}">
        <span class="mark">${kind === 'leaf' ? '' : `<diana-icon name="${kind === 'closed' ? 'chevRight' : 'chevDown'}"></diana-icon>`}</span>
        <button type="button">${kind === 'plain' ? '' : '<span class="pic"><diana-icon name="grid"></diana-icon></span>'}${label}</button>
      </li>`).join('')}
    </ul>`;
  }
}
customElements.define('result-tree', ResultTree);

class ResultDock extends HTMLElement {
  constructor() {
    super();
    this.attachShadow({ mode: 'open' }).innerHTML = `
    <style>
      :host { display: flex; flex-direction: column; min-height: 0; --tab-pad: 8px; --tab-pad-current: 14px; }
      .tools {
        display: flex;
        align-items: center;
        height: 30px;
        padding-left: 1px;
        --icon-size: 16px;
        --tool-width: 23px;
        --tool-height: 21px;
        --sep-height: 16px;
      }
      .fields {
        display: grid;
        grid-template-columns: 48px minmax(0, 1fr) 21px 21px;
        gap: 3px 2px;
        align-items: center;
        margin: 4px 0 6px;
      }
      .fields > :nth-child(2), .fields > :last-child { grid-column: 2 / 5; }
      .step { height: 20px; padding: 0; border: 1px solid #adadad; background: #e9e9e9; display: flex; align-items: center; justify-content: center; --icon-size: 17px; }
      .step:disabled { background: #ccc; border-color: #c4c4c4; }
      result-tree { flex: 1; min-height: 0; }
      label { white-space: nowrap; }
    </style>
    <dock-title>結果</dock-title>
    <div class="tools">
      <tool-button icon="resultSave"></tool-button>
      <tool-button icon="filter" active></tool-button>
      <tool-separator></tool-separator>
      <tool-button icon="resultOff" active></tool-button>
      <tool-button icon="result"></tool-button>
      <tool-button icon="shapeBoth" active></tool-button>
      <tool-button icon="shapeDef"></tool-button>
      <tool-button icon="shapeGrid"></tool-button>
      <tool-button icon="shapeOrig"></tool-button>
      <tool-separator></tool-separator>
      <tool-button icon="play" style="--icon-size:12px"></tool-button>
    </div>
    <div class="fields">
      <label>Analysis</label>
      <diana-select label="Analysis" value="Pile" disabled></diana-select>
      <label>Case</label>
      <diana-select label="Case" value="Load-step 1, Load-factor 0.10000, LO1"></diana-select>
      <button class="step" type="button" aria-label="前" disabled><diana-icon name="arrowLeft"></diana-icon></button>
      <button class="step" type="button" aria-label="次"><diana-icon name="arrowNext"></diana-icon></button>
      <label>Layer</label>
      <diana-select label="Layer" disabled></diana-select>
    </div>
    <result-tree></result-tree>
    <tab-strip tabs="ジオメトリ メッシュ 解析 結果 レポート" current="結果"></tab-strip>`;
  }
}
customElements.define('result-dock', ResultDock);

// Block mesh in drawing units (3 per screen pixel): left, front corner and the two edge vectors
const MESH = { left: [-406, 537], front: [40, 797], short: [446, 260], long: [852, -492], down: 495, nShort: 11, nLong: 21, nDown: 10 };

function meshPath() {
  const { left, front, short, long, down, nShort, nLong, nDown } = MESH;
  let d = '';
  for (let i = 0; i <= nShort; i++) {
    const x = left[0] + short[0] * i / nShort;
    const y = left[1] + short[1] * i / nShort;
    d += `M${x} ${y + down}V${y}l${long[0]} ${long[1]}`;
  }
  for (let i = 0; i <= nLong; i++) {
    const x = front[0] + long[0] * i / nLong;
    const y = front[1] + long[1] * i / nLong;
    d += `M${x} ${y + down}V${y}l${-short[0]} ${-short[1]}`;
  }
  for (let i = 1; i <= nDown; i++) {
    d += `M${left[0]} ${left[1] + down * i / nDown}l${short[0]} ${short[1]}l${long[0]} ${long[1]}`;
  }
  return d;
}

const LEGEND = ['#ff0000', '#ff9400', '#dfff00', '#4cff00', '#00ff4c', '#00ffe0', '#0094ff', '#0000ff'];
const LEVELS = ['3.93e-05', '-1.29e-04', '-2.97e-04', '-4.65e-04', '-6.33e-04', '-8.01e-04', '-9.69e-04', '-1.14e-03', '-1.30e-03'];

class ResultView extends HTMLElement {
  constructor() {
    super();
    this.attachShadow({ mode: 'open' }).innerHTML = `
    <style>
      :host {
        display: block;
        position: relative;
        overflow: hidden;
        background: #fff;
        border: 1px solid #d9d9d9;
        font: 16px/16px Lato, sans-serif;
      }
      svg { position: absolute; inset: 0; width: 100%; height: 100%; }
      .info, .legend { position: absolute; border: 1px solid #000; background: #fff; box-sizing: border-box; }
      .info { left: 10px; top: 4px; width: 293px; height: 70px; padding: 0 3px; white-space: nowrap; font-size: 17px; font-weight: 300; }
      .legend { right: 12px; bottom: 6px; width: 97px; padding: 0 4px; }
      .head { text-align: center; }
      .scale { display: flex; gap: 6px; padding: 4px 0 3px; line-height: 21px; }
      .bar { flex: none; width: 13px; padding: 13px 0 8px; }
      .bar i { display: block; height: 21px; }
      .nums { flex: 1; white-space: nowrap; }
    </style>
    <svg viewBox="-1043 -2 2583 1347">
      <polygon points="-406,537 446,45 892,305 892,800 40,1292 -406,1032" fill="#f00"/>
      <polygon fill="#ff9400" points="322,643 282,620 248,590 232,548 240,518 258,490 284,466 325,442 365,433 405,426 445,424 485,427 524,432 568,450 612,472 620,515 624,560 618,610 609,665 604,710 592,760 578,820 576,848 560,885 530,925 490,960 447,985 400,994 358,970 355,930 357,914 340,870 325,830 315,770 309,715 315,650"/>
      <polygon fill="#dfff00" points="360,541 384,526 412,508 445,506 485,508 522,531 540,560 550,600 555,650 552,700 540,745 530,775 540,800 546,830 538,860 520,890 500,915 460,938 425,945 400,940 396,920 390,905 395,880 402,850 392,820 380,790 377,750 380,700 390,650 403,603 360,577"/>
      <polygon fill="#4cff00" points="412,570 445,550 488,568 488,612 495,640 508,690 518,740 528,800 525,860 500,895 445,925 410,905 410,800 415,740 425,690 440,625 446,590"/>
      <polygon fill="#00ff4c" points="445,755 430,800 420,860 425,895 445,915 495,888 512,850 510,790 488,745"/>
      <polygon fill="#00ffe0" points="440,790 430,850 425,870 440,905 450,910 500,880 505,830 488,775"/>
      <polygon fill="#0094ff" points="441,830 428,865 440,882 448,895 495,872 498,840 488,820"/>
      <polygon fill="#00f" points="446,592 488,612 488,868 462,885 446,888"/>
      <g fill="none" stroke="#a5a5a5" stroke-width="3" shape-rendering="crispEdges">
        <path d="${meshPath()}"/>
        <path d="M488 568V860M385 805H445M390 912H445L500 880M403 850L445 912M530 775L545 830L540 912M378 745L402 850L400 994"/>
      </g>
      <g fill="none" stroke-width="4">
        <path d="M-784 1207V1155" stroke="#00c"/><path d="M-784 1207L-740 1182" stroke="#0d0"/><path d="M-784 1207L-738 1235" stroke="#d00"/>
      </g>
      <path d="M-790 1161l2-12h8l2 12z" fill="#00c"/>
      <path d="M-745 1177l12-2v10l-8 3z" fill="#080"/>
      <path d="M-745 1233l4-8 12 13h-12z" fill="#d00"/>
      <g font-family="Liberation Sans" font-size="28">
        <text x="-776" y="1144" fill="#33f">Z</text><text x="-732" y="1169" fill="#3e3">Y</text><text x="-732" y="1218" fill="#f33">X</text>
      </g>
    </svg>
    <div class="info">Pile<br>Load-step 1, Load-factor 0.10000, LO1<br>Displacements TDtZ<br>min: -1.30e-03m max: 3.93e-05m</div>
    <div class="legend">
      <div class="head">TDtZ<br>(m)</div>
      <div class="scale">
        <div class="bar">${LEGEND.map(c => `<i style="background:${c}"></i>`).join('')}</div>
        <div class="nums">${LEVELS.map(v => `<div>${v}</div>`).join('')}</div>
      </div>
    </div>`;
  }
}
customElements.define('result-view', ResultView);

class MessageDock extends HTMLElement {
  constructor() {
    super();
    this.attachShadow({ mode: 'open' }).innerHTML = `
    <style>
      :host { display: flex; flex-direction: column; height: 218px; }
      .tools {
        display: flex;
        align-items: center;
        height: 29px;
        padding-left: 1px;
        --icon-size: 16px;
        --tool-width: 23px;
        --tool-height: 21px;
        --sep-height: 16px;
      }
      textarea { flex: 1; resize: none; margin: 0; border: 1px solid #7a7a7a; background: #fff; outline: 0; }
    </style>
    <dock-title closable>メッセージ</dock-title>
    <div class="tools">
      <tool-button icon="broom" muted></tool-button>
      <tool-button icon="save" muted></tool-button>
      <tool-separator></tool-separator>
      <tool-button icon="arrowLeft"></tool-button>
      <tool-button icon="arrowRight"></tool-button>
    </div>
    <textarea aria-label="メッセージ" readonly></textarea>
    <tab-strip tabs="メッセージ コマンドコンソール" current="メッセージ"></tab-strip>`;
  }
}
customElements.define('message-dock', MessageDock);

const ACTIONS = [
  ['作成',
    'block ブロック', 'line ライン', 'cylinder シリンダー', 'circle サークル', 'cone コーン', 'arc アーク', 'prism プリズム', 'ellipse 楕円',
    'torus トーラス', 'ellipseArc 楕円アーク', 'sphere スフィア', 'polyline ポリライン', 'polySheet ポリゴンシート', 'curve カーブ',
    'circleSheet サークルシート', 'helix らせん', 'curvedSheet 曲面シート', 'point ポイント'],
  ['修正',
    'move 移動', 'loft ロフト', 'rotate 回転', 'extend 延長', 'scale 拡大縮小', 'trim トリム', 'arrayCopy 配列コピー', 'sewing ソーイング',
    'mirror シェープの鏡面コピー', 'splitWire ワイヤの分割', 'align 整列', 'chamfer 面取り', 'unite 結合', 'fillet フィレット',
    'subtract 差', 'faceMove フェイスの移動', 'intersect 交差', 'faceRotate フェイスの回転', 'section 切り取り', 'splitEdge エッジの分割',
    'project 投影', 'broom 小さいエンティティの削除', 'imprint インプリント', 'wrench クリーニング', 'extrude シェープの押し出し', 'gauge 最適化',
    'sweep スイープ', 'virtualMove 仮想移動'],
  ['割り当て',
    'propShape シェーププロパティ', 'support 拘束の追加', 'propBar 埋め込み鉄筋プロパティ', 'connection コネクション', 'propPile 杭プロパティ', 'tying タイイング',
    'propSheet 矢板プロパティ', 'initial 初期場', 'propAnchor アンカープロパティ', 'timeDep 環境の時間依存性', 'propSigma 合成要素プロパティ', 'water 水位']
];

class ActionDock extends HTMLElement {
  constructor() {
    super();
    this.attachShadow({ mode: 'open' }).innerHTML = `
    <style>
      :host { display: flex; flex-direction: column; min-height: 0; }
      .body { flex: 1; display: flex; gap: 1px; min-height: 0; padding: 2px 1px 0 2px; }
      .list { flex: 1; min-width: 0; overflow: hidden; }
      h2 {
        height: 20px;
        margin: 0;
        padding-left: 2px;
        background: linear-gradient(#eaf1fb, #c9d8f0 60%);
        font-size: 12px;
        font-weight: 400;
        line-height: 20px;
        font-feature-settings: "palt";
      }
      .items { display: grid; grid-template-columns: 167px 1fr; padding-left: 2px; --icon-size: 16px; }
      .items button {
        display: flex;
        align-items: center;
        gap: 1px;
        height: 20px;
        padding: 0;
        border: 0;
        background: none;
        color: #000;
        font: inherit;
        font-size: 11px;
        font-feature-settings: "palt";
        white-space: nowrap;
      }
      .scroll { width: 16px; display: flex; flex-direction: column; background: #efefef; --icon-size: 9px; }
      .scroll button { height: 17px; padding: 0; border: 0; background: none; display: flex; align-items: center; justify-content: center; }
      .thumb { flex: 5; background: #cdcdcd; }
      .rest { flex: 1; }
      .down { transform: rotate(180deg); }
    </style>
    <dock-title closable>アクション</dock-title>
    <div class="body">
      <div class="list">
        ${ACTIONS.map(([title, ...items]) => `<h2>${title}</h2><div class="items">${items.map(item => {
          const [icon, text] = item.split(' ');
          return `<button type="button"><diana-icon name="${icon}"></diana-icon>${text}</button>`;
        }).join('')}</div>`).join('')}
      </div>
      <div class="scroll">
        <button type="button" aria-label="上へ"><diana-icon name="chevUp"></diana-icon></button>
        <div class="thumb"></div>
        <div class="rest"></div>
        <button type="button" class="down" aria-label="下へ"><diana-icon name="chevUp"></diana-icon></button>
      </div>
    </div>
    <tab-strip tabs="プロパティ アクション" current="アクション"></tab-strip>`;
  }
}
customElements.define('action-dock', ActionDock);

class StatusBar extends HTMLElement {
  constructor() {
    super();
    this.attachShadow({ mode: 'open' }).innerHTML = `
    <style>
      :host { display: flex; justify-content: flex-end; align-items: center; height: 28px; font-feature-settings: "palt"; }
      .coords {
        width: 52px;
        height: 24px;
        box-sizing: border-box;
        border: 1px solid;
        border-color: #999 #fff #fff #999;
        font-family: "Liberation Sans", sans-serif;
        font-size: 13px;
        line-height: 20px;
        text-align: center;
        white-space: nowrap;
      }
      .units { display: flex; align-items: center; gap: 1px; height: 24px; margin-left: 1px; padding: 0 14px 0 8px; border: solid #d0d0d0; border-width: 0 1px; --icon-size: 16px; }
      .grip { align-self: flex-end; width: 9px; height: 9px; margin: 0 1px 1px 6px; background: radial-gradient(circle at 1px 1px, #b0b0b0 1px, transparent 1px) 0 0 / 3px 3px; clip-path: polygon(100% 0, 100% 100%, 0 100%); }
    </style>
    <div class="coords">--, --, --</div>
    <div class="units"><diana-icon name="weight"></diana-icon><span>単位:ユーザー定義</span></div>
    <div class="grip"></div>`;
  }
}
customElements.define('status-bar', StatusBar);

class DianaWindow extends HTMLElement {
  constructor() {
    super();
    this.attachShadow({ mode: 'open' }).innerHTML = `
    <style>
      :host {
        display: flex;
        flex-direction: column;
        height: 100vh;
        box-sizing: border-box;
        border: 1px solid #6c6c6c;
        background: #efefef;
      }
      main {
        flex: 1;
        min-height: 0;
        display: grid;
        grid-template-columns: 346px minmax(0, 1fr) 366px;
        gap: 4px;
      }
      .center { display: flex; flex-direction: column; gap: 6px; min-height: 0; }
      result-view { flex: 1; }
    </style>
    <title-bar>Diana Interactive Environment — Pile.dpf*</title-bar>
    <menu-bar></menu-bar>
    <tool-bars></tool-bars>
    <main>
      <result-dock></result-dock>
      <div class="center">
        <result-view></result-view>
        <message-dock></message-dock>
      </div>
      <action-dock></action-dock>
    </main>
    <status-bar></status-bar>`;
  }
}
customElements.define('diana-window', DianaWindow);
</script>
</body>
</html>
